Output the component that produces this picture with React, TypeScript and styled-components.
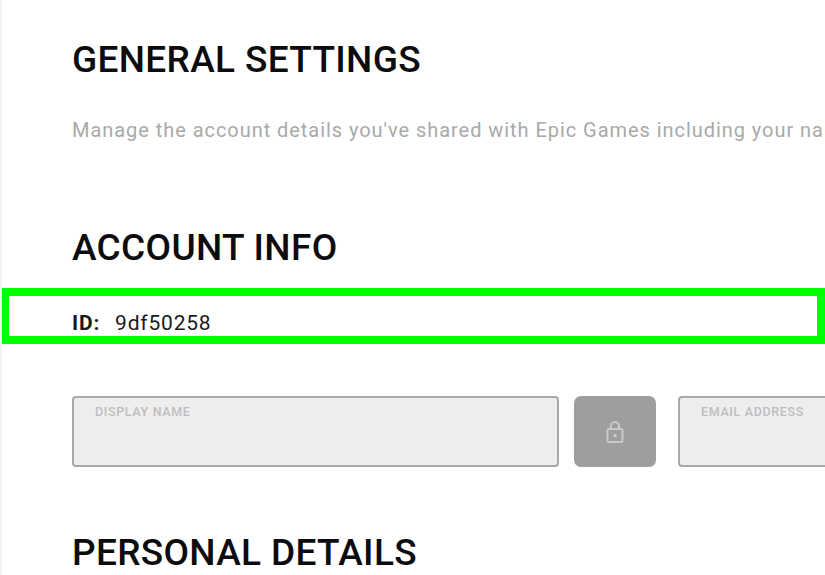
import React from 'react';
import styled, { createGlobalStyle } from 'styled-components';

const GlobalStyle = createGlobalStyle`
  html, body {
    margin: 0;
    padding: 0;
    background: #ffffff;
    overflow: hidden;
  }
`;

const Page = styled.div`
  position: relative;
  width: 825px;
  height: 575px;
  overflow: hidden;
  box-sizing: border-box;
  border-left: 2px solid #f2f2f2;
  padding: 39px 0 0 70px;
  font-family: Roboto, "Liberation Sans", sans-serif;
`;

const Heading = styled.h2`
  margin: 0;
  font-size: 37px;
  line-height: 41px;
  font-weight: 500;
  letter-spacing: 0.33px;
  color: #0c0c0e;
  white-space: nowrap;
`;

const Intro = styled.p`
  margin: 38px 0 0;
  font-size: 20px;
  line-height: 24px;
  letter-spacing: 0.95px;
  color: #a9a9a9;
  white-space: nowrap;
`;

const AccountHeading = styled(Heading)`
  margin-top: 85px;
`;

const IdRow = styled.div`
  display: flex;
  gap: 15px;
  margin-top: 43px;
  font-size: 21px;
  line-height: 24px;
  letter-spacing: 0.8px;
  color: #1a1a20;
`;

const IdLabel = styled.span`
  font-weight: 700;
`;

const Fields = styled.div`
  display: flex;
  gap: 18px;
  margin-top: 61px;
`;

const Field = styled.div<{ $width: number }>`
  flex: none;
  box-sizing: border-box;
  width: ${(p) => p.$width}px;
  height: 71px;
  padding: 6px 21px;
  background: #eeeeee;
  border: 2px solid #a8a8a8;
  border-radius: 4px;
  font-size: 12.5px;
  line-height: 15px;
  font-weight: 500;
  letter-spacing: 0.65px;
  color: #bdbdbd;
  white-space: nowrap;
`;

const LockButton = styled.div`
  flex: none;
  display: flex;
  align-items: center;
  justify-content: center;
  width: 82px;
  height: 71px;
  margin-left: -3px;
  margin-right: 4px;
  border-radius: 7px;
  background: #9e9e9e;
`;

const SectionHeading = styled(Heading)`
  margin-top: 65px;
`;

const Highlight = styled.div`
  position: absolute;
  left: -1px;
  top: 288px;
  width: 824px;
  height: 56px;
  box-sizing: border-box;
  border: 8px solid #00ff00;
  pointer-events: none;
`;

const App: React.FC = () => {
  return (
    <>
      <GlobalStyle />
      <Page>
        <Heading>GENERAL SETTINGS</Heading>
        <Intro>Manage the account details you've shared with Epic Games including your name</Intro>
        <AccountHeading>ACCOUNT INFO</AccountHeading>
        <IdRow>
          <IdLabel>ID:</IdLabel>
          <span>9df50258</span>
        </IdRow>
        <Fields>
          <Field $width={487}>DISPLAY NAME</Field>
          <LockButton>
            <svg width="18" height="24" viewBox="0 0 18 24" fill="none" stroke="#c9c9c9" strokeWidth="2">
              <path d="M5 9V6a4 4 0 0 1 8 0v3" />
              <rect x="1.5" y="9" width="15" height="13" rx="1.5" />
              <rect x="7.5" y="14" width="3" height="3" fill="#c9c9c9" stroke="none" />
            </svg>
          </LockButton>
          <Field $width={300}>EMAIL ADDRESS</Field>
        </Fields>
        <SectionHeading>PERSONAL DETAILS</SectionHeading>
        <Highlight />
      </Page>
    </>
  );
};

export default App;
